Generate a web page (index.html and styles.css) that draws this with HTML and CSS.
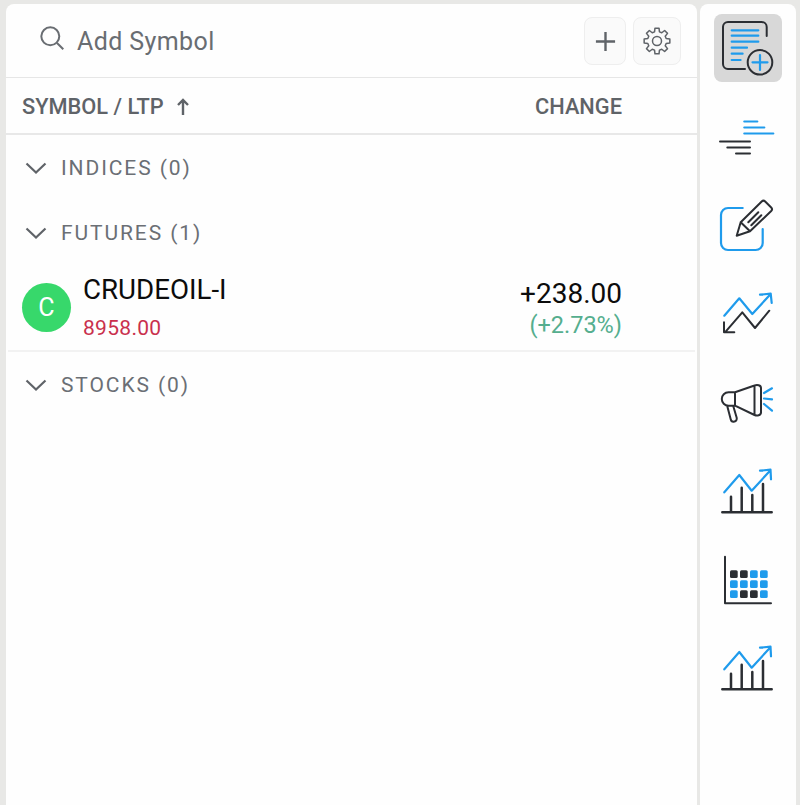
FILE: index.html
```html
<!DOCTYPE html>
<html lang="en">
<head>
  <meta charset="UTF-8">
  <title>Watchlist</title>
  <link rel="stylesheet" href="styles.css">
</head>
<body>
  <div class="app">
    <div class="panel">
      <div class="searchbar">
        <svg class="search-icon" viewBox="0 0 28 28"><circle cx="12.3" cy="12.3" r="9"/><path d="M19 19l6.3 6.3"/></svg>
        <span class="search-text">Add Symbol</span>
        <button class="tool-btn" type="button">
          <svg class="plus-icon" viewBox="0 0 24 24"><path d="M12 2v20M2 12h20"/></svg>
        </button>
        <button class="tool-btn" type="button">
          <svg class="gear-icon" viewBox="-15 -15 30 30"><path d="M-2.46-9.18L-2.03-12.84 2.03-12.84 2.46-9.18 4.75-8.23 7.64-10.51 10.51-7.64 8.23-4.75 9.18-2.46 12.84-2.03 12.84 2.03 9.18 2.46 8.23 4.75 10.51 7.64 7.64 10.51 4.75 8.23 2.46 9.18 2.03 12.84-2.03 12.84-2.46 9.18-4.75 8.23-7.64 10.51-10.51 7.64-8.23 4.75-9.18 2.46-12.84 2.03-12.84-2.03-9.18-2.46-8.23-4.75-10.51-7.64-7.64-10.51-4.75-8.23Z"/><circle r="4.5"/></svg>
        </button>
      </div>

      <div class="table-head">
        <span class="head-symbol">SYMBOL / LTP</span>
        <svg class="sort-icon" viewBox="0 0 14 18"><path d="M7 17V2M2 7l5-5 5 5"/></svg>
        <span class="head-change">CHANGE</span>
      </div>

      <div class="group">
        <svg class="chevron" viewBox="0 0 22 12"><path d="M1.500 1.500L11 10.500l9.500-9"/></svg>
        <span>INDICES (0)</span>
      </div>
      <div class="group">
        <svg class="chevron" viewBox="0 0 22 12"><path d="M1.500 1.500L11 10.500l9.500-9"/></svg>
        <span>FUTURES (1)</span>
      </div>

      <div class="symbol-row">
        <div class="avatar">C</div>
        <div class="symbol-info">
          <div class="symbol-name">CRUDEOIL-I</div>
          <div class="symbol-ltp">8958.00</div>
        </div>
        <div class="symbol-change">
          <div class="change-abs">+238.00</div>
          <div class="change-pct">(+2.73%)</div>
        </div>
      </div>

      <div class="group">
        <svg class="chevron" viewBox="0 0 22 12"><path d="M1.500 1.500L11 10.500l9.500-9"/></svg>
        <span>STOCKS (0)</span>
      </div>
    </div>

    <div class="sidebar">
      <!-- add to watchlist -->
      <div class="side-item active">
        <svg viewBox="0 0 68 68">
          <path class="dark" d="M31 55H14a5 5 0 0 1-5-5V13a5 5 0 0 1 5-5h33.700a5 5 0 0 1 5 5v9"/>
          <path class="blue" d="M17.700 16.300h26.600M17.700 21.700h26.600M17.700 27.700h26.600M17.700 33.700H33M17.700 39.700h10.900M17.700 46h8.900"/>
          <circle class="dark" cx="46" cy="48.300" r="12.300"/>
          <path class="blue" d="M46 41v15M38.500 48.300h15"/>
        </svg>
      </div>
      <!-- filter -->
      <div class="side-item">
        <svg viewBox="0 0 68 68">
          <path class="blue" d="M30.300 18.500h13M30.300 24.500h20M30.300 30.500h29"/>
          <path class="dark" d="M6 38.500h30M13.300 44.500H36M22 50.500h14"/>
        </svg>
      </div>
      <!-- notes -->
      <div class="side-item">
        <svg viewBox="0 0 68 68">
          <path class="blue" d="M28.700 17H14a7 7 0 0 0-7 7v28a7 7 0 0 0 7 7h27.700a7 7 0 0 0 7-7V38"/>
          <path class="dark" d="M22.700 44.700L26.700 31.300 47.700 10.500a2.500 2.500 0 0 1 3.500 0l6 6a2.500 2.500 0 0 1 0 3.500L36 40.300ZM26.700 31.300L36 40.300M34.300 31.300l10-10M37.300 34.300l10-10"/>
        </svg>
      </div>
      <!-- trends -->
      <div class="side-item">
        <svg viewBox="0 0 68 68">
          <path class="blue" d="M10.300 35.700L25.300 18.300 38.300 34 56.700 14M46 14.700l10.700-1 1 9.300"/>
          <path class="dark" d="M55.300 30.700L41 48 28.300 32.300 11 52.300M10 42.300v10h10.300"/>
        </svg>
      </div>
      <!-- announcements -->
      <div class="side-item">
        <svg viewBox="0 0 68 68">
          <path class="dark" d="M21 24.300L40.500 17.500C43 16.500 47 17 47 20V44.500C47 47.500 43 48 40.500 47L21 37.700H14.500a6.700 6.700 0 0 1 0-13.400ZM21 24.300v13.400M40.500 17.500V47M13.300 38.300l3.400 13a3 3 0 0 0 6-1.500l-3.400-11.500"/>
          <path class="blue" d="M50 25l8-4.700M50 30.500l8 .8M50 36l8 6.700"/>
        </svg>
      </div>
      <!-- chart -->
      <div class="side-item">
        <svg viewBox="0 0 68 68">
          <path class="dark thick" d="M17 39.700v15.600M27.700 30.700v24.600M38.300 38v17.300M49 27v28.300M8.300 55.300h49.400"/>
          <path class="blue" d="M10.300 35.300L25.300 18l12.400 15.700L56 13.700M46 13.700l10.500-1 .5 9.600"/>
        </svg>
      </div>
      <!-- heatmap -->
      <div class="side-item">
        <svg viewBox="0 0 68 68">
          <path class="dark" d="M11 10.700v46.600h46"/>
          <rect class="cell-dark" x="16" y="24.300" width="7.700" height="7.700" rx="1.500"/>
          <rect class="cell-dark" x="26" y="24.300" width="7.700" height="7.700" rx="1.500"/>
          <rect class="cell-blue" x="36" y="24.300" width="7.700" height="7.700" rx="1.500"/>
          <rect class="cell-blue" x="46" y="24.300" width="7.700" height="7.700" rx="1.500"/>
          <rect class="cell-blue" x="16" y="34.300" width="7.700" height="7.700" rx="1.500"/>
          <rect class="cell-blue" x="26" y="34.300" width="7.700" height="7.700" rx="1.500"/>
          <rect class="cell-blue" x="36" y="34.300" width="7.700" height="7.700" rx="1.500"/>
          <rect class="cell-blue" x="46" y="34.300" width="7.700" height="7.700" rx="1.500"/>
          <rect class="cell-blue" x="16" y="44.300" width="7.700" height="7.700" rx="1.500"/>
          <rect class="cell-dark" x="26" y="44.300" width="7.700" height="7.700" rx="1.500"/>
          <rect class="cell-dark" x="36" y="44.300" width="7.700" height="7.700" rx="1.500"/>
          <rect class="cell-blue" x="46" y="44.300" width="7.700" height="7.700" rx="1.500"/>
        </svg>
      </div>
      <!-- chart 2 -->
      <div class="side-item">
        <svg viewBox="0 0 68 68">
          <path class="dark thick" d="M17 39.700v15.600M27.700 30.700v24.600M38.300 38v17.300M49 27v28.300M8.300 55.300h49.400"/>
          <path class="blue" d="M10.300 35.300L25.300 18l12.400 15.700L56 13.700M46 13.700l10.500-1 .5 9.600"/>
        </svg>
      </div>
    </div>
  </div>
</body>
</html>
```

FILE: styles.css
```css
* {
  box-sizing: border-box;
}
body {
  margin: 0;
  height: 805px;
  overflow: hidden;
  background-color: #e8e8e6;
  font-family: Roboto, "Liberation Sans", sans-serif;
}
.app {
  display: flex;
  gap: 3px;
  height: 100%;
  padding: 4px 4px 0 6px;
}
.panel {
  width: 691px;
  background-color: #fefefe;
  border-radius: 8px 8px 0 0;
}
.searchbar {
  display: flex;
  align-items: center;
  height: 74px;
  padding: 1px 16px 0 32px;
  border-bottom: 1px solid #e6e6e6;
}
.search-icon {
  width: 28px;
  height: 28px;
  margin-bottom: 6px;
  fill: none;
  stroke: #696d72;
  stroke-width: 2;
}
.search-text {
  flex: 1;
  margin-left: 11px;
  padding-top: 1px;
  font-size: 25px;
  letter-spacing: 0.4px;
  color: #696d72;
}
.tool-btn {
  display: flex;
  align-items: center;
  justify-content: center;
  width: 42px;
  height: 48px;
  margin-left: 7px;
  padding: 0;
  background-color: #fafafa;
  border: 1px solid #eeeeee;
  border-radius: 8px;
}
.tool-btn + .tool-btn {
  width: 48px;
}
.plus-icon {
  width: 23px;
  height: 23px;
  fill: none;
  stroke: #5f6368;
  stroke-width: 2.500;
}
.gear-icon {
  width: 30px;
  height: 30px;
  fill: none;
  stroke: #5f6368;
  stroke-width: 1.500;
  stroke-linejoin: round;
}
.table-head {
  display: flex;
  align-items: center;
  height: 57px;
  padding: 2px 75px 0 16px;
  border-bottom: 2px solid #e8e8e8;
  font-size: 21.800px;
  font-weight: 500;
  color: #5f6368;
}
.sort-icon {
  width: 14px;
  height: 18px;
  margin-left: 12px;
  fill: none;
  stroke: #5f6368;
  stroke-width: 2.400;
}
.head-change {
  margin-left: auto;
}
.group {
  display: flex;
  align-items: center;
  height: 65px;
  padding: 1px 0 0 19px;
  font-size: 21px;
  letter-spacing: 1.900px;
  color: #6b6f75;
}
.chevron {
  width: 22px;
  height: 12px;
  margin-right: 14px;
  fill: none;
  stroke: #5f6368;
  stroke-width: 2.200;
}
.symbol-row {
  display: flex;
  align-items: center;
  height: 87px;
  margin: 0 2px;
  padding: 0 73px 0 14px;
  border-bottom: 2px solid #f2f2f2;
}
.avatar {
  display: flex;
  align-items: center;
  justify-content: center;
  width: 49px;
  height: 49px;
  border-radius: 50%;
  background-color: #37d86b;
  color: #ffffff;
  font-size: 25px;
}
.symbol-info {
  flex: 1;
  margin-left: 12px;
}
.symbol-name {
  margin-top: -2px;
  font-size: 27.700px;
  line-height: 32px;
  color: #0c0c0c;
}
.symbol-ltp {
  margin-top: 10px;
  font-size: 21px;
  line-height: 24px;
  letter-spacing: 0.3px;
  color: #c9304d;
}
.symbol-change {
  text-align: right;
  margin-top: 1px;
}
.change-abs {
  font-size: 28px;
  line-height: 30px;
  color: #0c0c0c;
}
.change-pct {
  margin-top: 4px;
  font-size: 23.500px;
  line-height: 24px;
  color: #55ae8e;
}
.sidebar {
  display: flex;
  flex-direction: column;
  align-items: center;
  gap: 20.600px;
  width: 96px;
  padding-top: 10px;
  background-color: #fefefe;
  border-radius: 8px 8px 0 0;
}
.side-item {
  width: 68px;
  height: 68px;
  border-radius: 8px;
}
.side-item.active {
  background-color: #d8d8d8;
}
.side-item svg {
  display: block;
  width: 68px;
  height: 68px;
}
.dark {
  fill: none;
  stroke: #2b2e33;
  stroke-width: 2;
  stroke-linecap: round;
  stroke-linejoin: round;
}
.dark.thick {
  stroke-width: 2.500;
}
.blue {
  fill: none;
  stroke: #1f9bec;
  stroke-width: 2.200;
  stroke-linecap: round;
  stroke-linejoin: round;
}
.cell-dark {
  fill: #2b2e33;
}
.cell-blue {
  fill: #1f9bec;
}
```
